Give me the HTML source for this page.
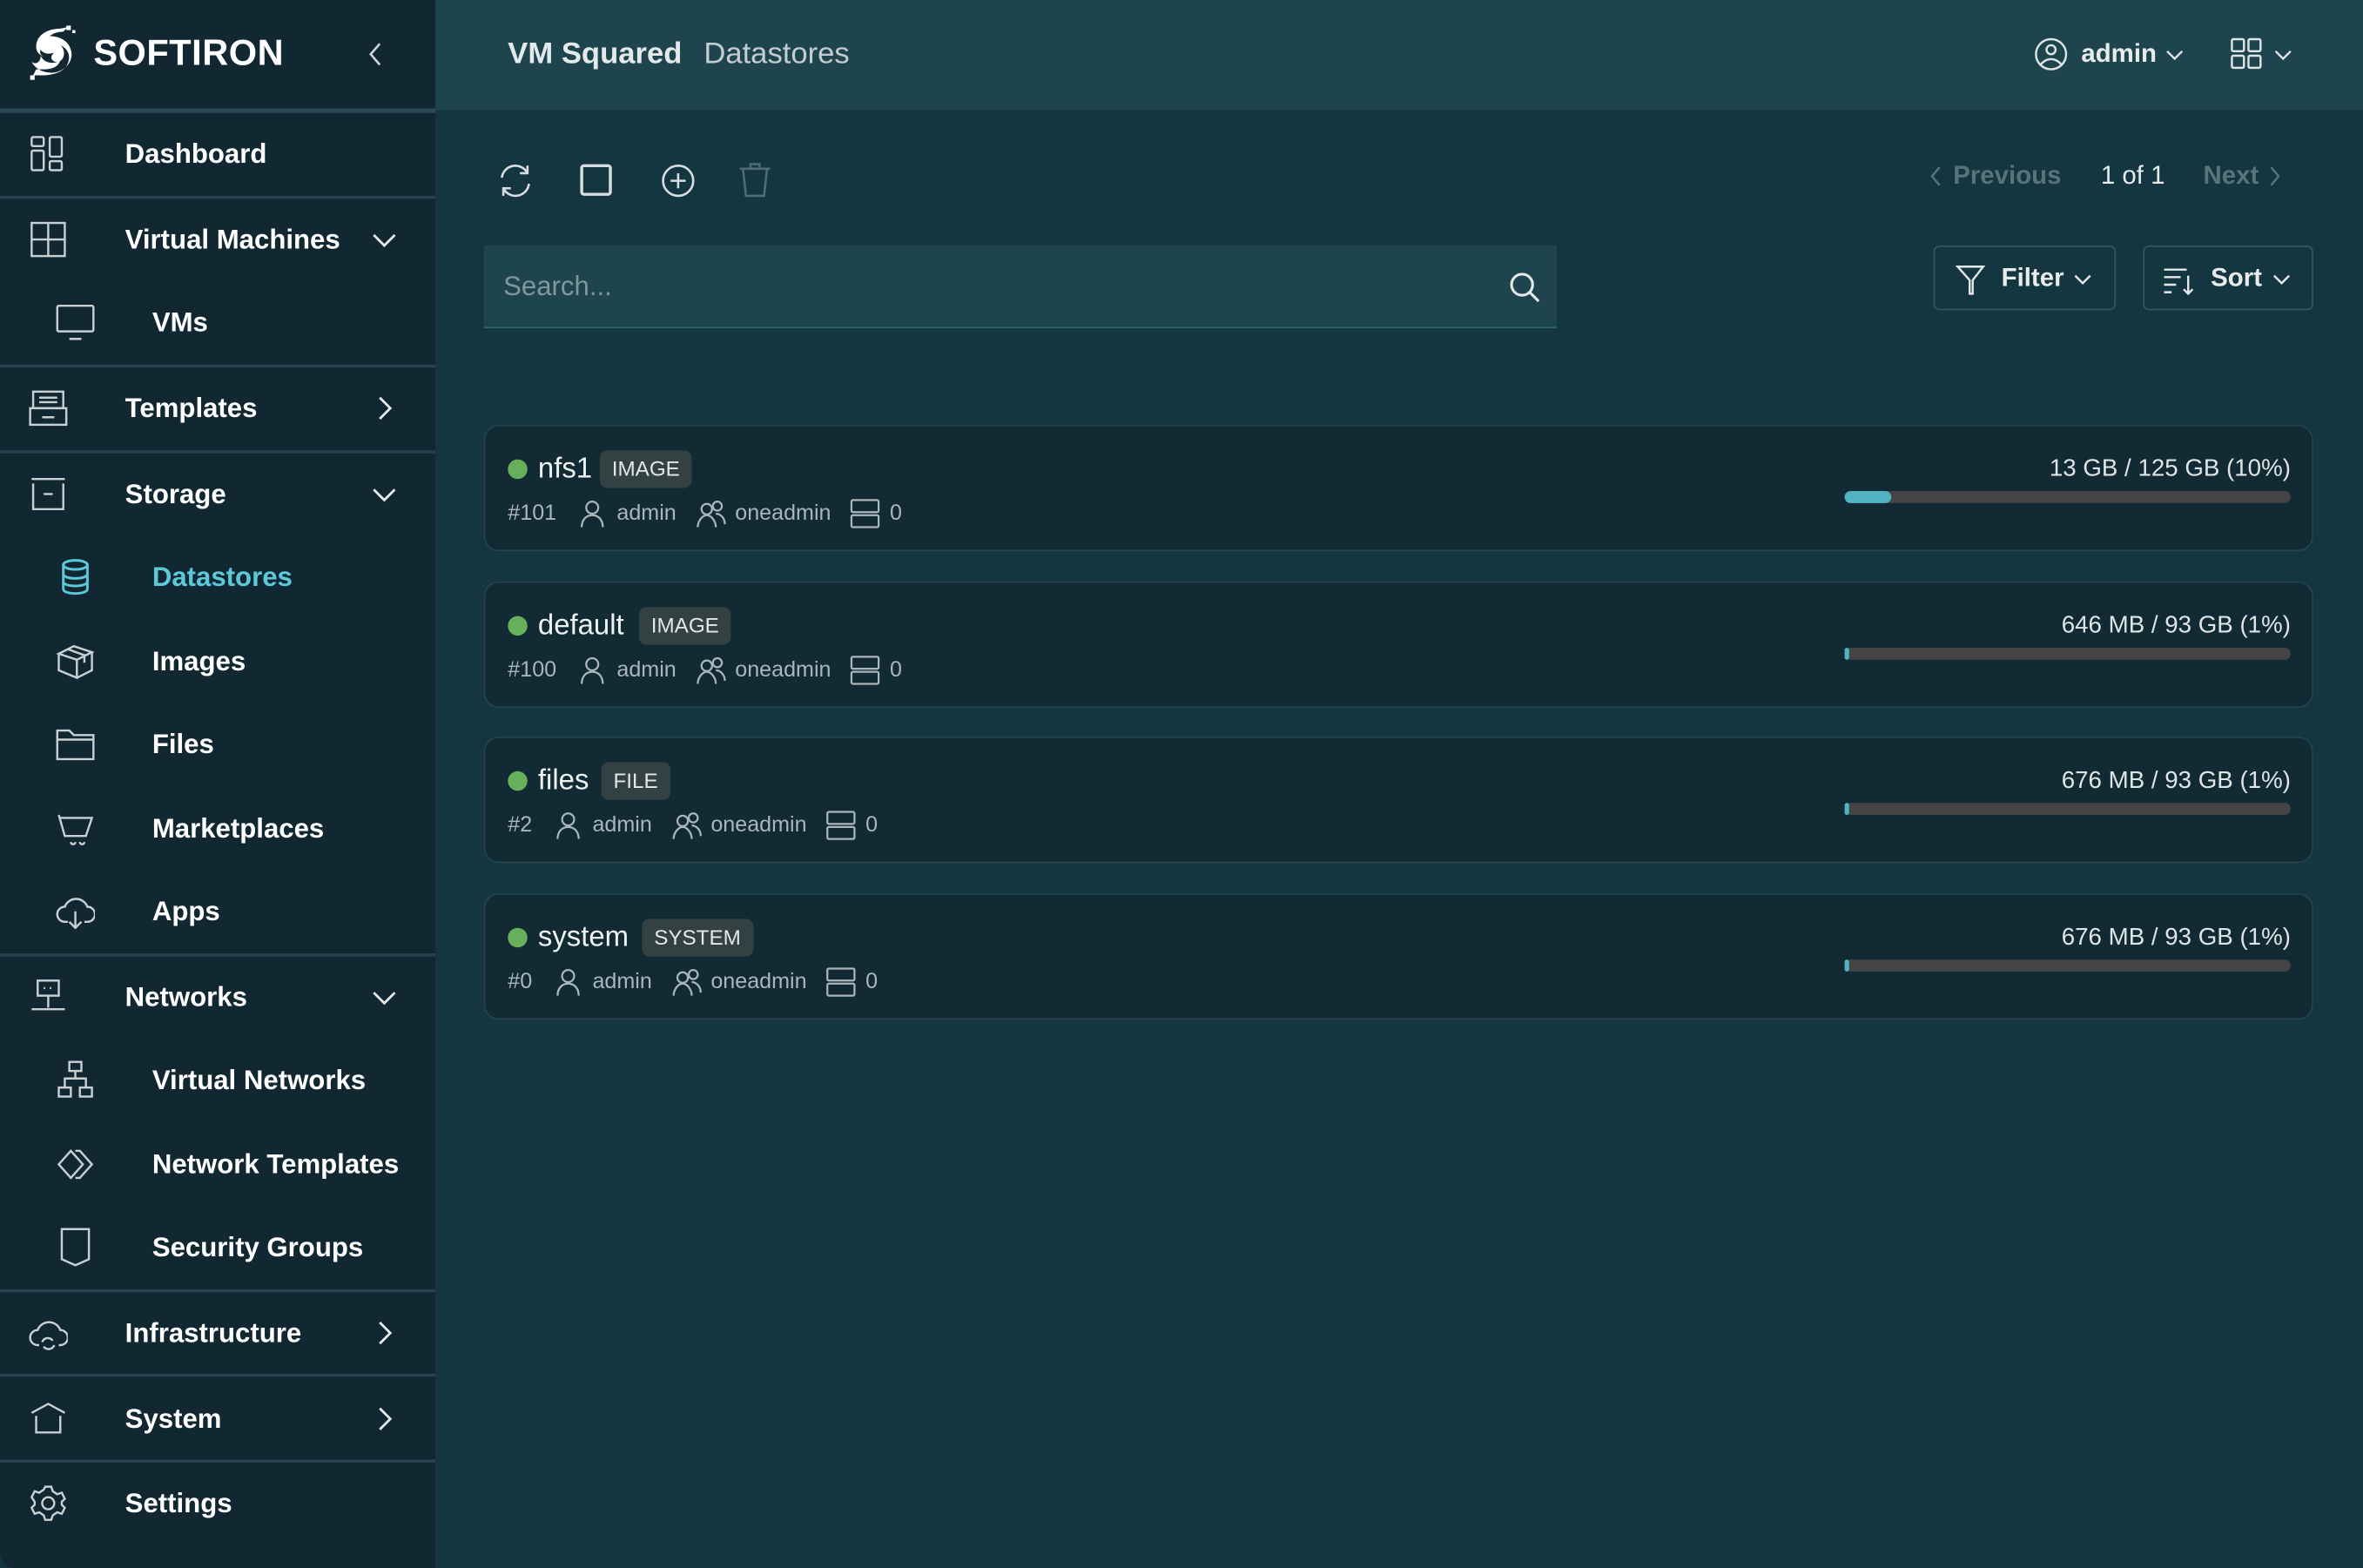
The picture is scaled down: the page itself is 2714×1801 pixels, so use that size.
<!DOCTYPE html>
<html><head><meta charset="utf-8">
<style>
*{box-sizing:border-box;margin:0;padding:0}
html,body{width:2714px;height:1801px;overflow:hidden;background:#143640}
#root{position:absolute;left:0;top:0;width:1568px;height:1041px;transform:scale(1.73087,1.7301);transform-origin:0 0;font-family:"Liberation Sans",sans-serif;color:#e8eced}
#side{position:absolute;left:0;top:0;width:289px;height:1041px;background:#112833;border-bottom-left-radius:10px}
.logo{position:absolute;left:18px;top:16px;height:40px;display:flex;align-items:center;font-weight:bold;font-size:24px;color:#fff;letter-spacing:.3px}
.hsep{position:absolute;left:0;width:289px;height:2px;background:#28434d}
.it{position:absolute;left:0;width:289px;height:30px;display:flex;align-items:center;font-size:18px;font-weight:bold;color:#fff}
.it svg.ic{position:absolute;width:26px;height:26px;fill:none;stroke:#c9d0d2;stroke-width:1.4}
.it span{position:absolute}
.top svg.ic{left:19px}.top span{left:83px}
.sub svg.ic{left:37px}.sub span{left:101px}
.chev{position:absolute;left:246px;width:18px;height:18px;fill:none;stroke:#e8eced;stroke-width:1.6}
#hdr{position:absolute;left:289px;top:0;width:1279px;height:73px;background:#1e454d}
.t1{position:absolute;left:48px;top:25px;font-size:20px;font-weight:bold;color:#e4e9ea}
.t2{position:absolute;left:178px;top:25px;font-size:20px;color:#c3ccce}
.tb svg{position:absolute;fill:none;stroke:#d8dee0;stroke-width:1.5}
.search{position:absolute;left:321px;top:163px;width:712px;height:55px;background:#1e454d;border-bottom:1.5px solid #2a6870}
.search span{position:absolute;left:13px;top:17px;font-size:18px;color:#7f979b}
.btn{position:absolute;top:163px;height:43px;border:1.5px solid #2a5a62;border-radius:4px;font-size:17px;font-weight:bold;color:#e8eced}
.card{position:absolute;left:321px;width:1214px;height:84px;background:#112a33;border:1.5px solid #25434b;border-radius:10px}
.dot{position:absolute;left:15px;top:22px;width:13px;height:13px;border-radius:50%;background:#66b05c}
.nm{position:absolute;left:35px;top:18px;font-size:19px;color:#eef2f3}
.tag{position:absolute;top:16px;height:25px;padding:0 8px;line-height:25px;background:#334143;border-radius:5px;font-size:14px;color:#e2e7e8}
.meta{position:absolute;left:15px;top:48px;font-size:14.5px;color:#aab6b9;display:flex;align-items:center;white-space:nowrap}
.meta svg{fill:none;stroke:#aab6b9;stroke-width:1.3;width:20px;height:20px;margin:0 6px 0 0}
.cap{position:absolute;right:14px;top:20px;font-size:16px;color:#dfe5e6}
.bar{position:absolute;left:902px;top:43px;width:296px;height:8px;border-radius:4px;background:#444}
.bar i{position:absolute;left:0;top:0;height:8px;border-radius:4px;background:#52b4c2}
</style></head><body><div id="root">
<div id="side">
 <div class="logo"><svg width="36" height="38" viewBox="0 0 36 38"><path d="M22 2c-8 0-16 4-16 12 0 4 3 6 6 7-3-1-4-3-3-5 2 3 6 3 9 2-4 3-1 7 3 6 5-2 4-9 1-11 5 2 8 8 4 14-3 4-9 6-16 6h-6l2-4h5c6 0 10-2 11-6-4 3-11 2-13-3 0 5-4 6-6 4 3 6 10 8 16 7 8-2 12-9 10-15-2-7-9-9-14-9 2-2 6-3 9-3l3-3z" fill="#fff"/><rect x="26" y="0" width="3" height="3" fill="#fff"/><rect x="30" y="3" width="2" height="2" fill="#fff"/><rect x="2" y="33" width="3" height="3" fill="#fff"/></svg><span style="margin-left:8px">SOFTIRON</span></div>
 <svg style="position:absolute;left:241px;top:27px" width="16" height="18" viewBox="0 0 16 18" fill="none" stroke="#cfd6d8" stroke-width="1.5"><path d="M11 2L5 9l6 7"/></svg>
 <div class="hsep" style="top:72px;height:3px;background:#2b4a53"></div>
 <div class="hsep" style="top:130px"></div><div class="hsep" style="top:242px"></div><div class="hsep" style="top:299px"></div><div class="hsep" style="top:633px"></div><div class="hsep" style="top:856px"></div><div class="hsep" style="top:912px"></div><div class="hsep" style="top:969px"></div>

 <div class="it top" style="top:87px"><svg class="ic" viewBox="0 0 26 26"><rect x="2" y="2" width="8" height="6" rx="1"/><rect x="2" y="11" width="8" height="13" rx="1"/><rect x="14" y="2" width="8" height="13" rx="1"/><rect x="14" y="18" width="8" height="6" rx="1"/></svg><span>Dashboard</span></div>
 <div class="it top" style="top:144px"><svg class="ic" viewBox="0 0 26 26"><rect x="2" y="2" width="22" height="22"/><path d="M13 2v22M2 13h22"/></svg><span>Virtual Machines</span><svg class="chev" viewBox="0 0 18 18"><path d="M2 6l7 7 7-7"/></svg></div>
 <div class="it sub" style="top:199px"><svg class="ic" viewBox="0 0 26 26"><rect x="1" y="2" width="24" height="17" rx="1"/><path d="M9 24h8"/></svg><span>VMs</span></div>
 <div class="it top" style="top:256px"><svg class="ic" viewBox="0 0 26 26"><rect x="3" y="2" width="20" height="11"/><rect x="1" y="13" width="24" height="11"/><path d="M7 6h12M7 9h12M9 19h8"/></svg><span>Templates</span><svg class="chev" viewBox="0 0 18 18"><path d="M6 2l7 7-7 7"/></svg></div>
 <div class="it top" style="top:313px"><svg class="ic" viewBox="0 0 26 26"><path d="M2 3h22M3 6v17h20V6"/><path d="M10 13h6"/></svg><span>Storage</span><svg class="chev" viewBox="0 0 18 18"><path d="M2 6l7 7 7-7"/></svg></div>
 <div class="it sub" style="top:368px;color:#5cc8d8"><svg class="ic" viewBox="0 0 26 26" style="stroke:#5cc8d8;stroke-width:1.7"><ellipse cx="13" cy="5" rx="8" ry="3"/><path d="M5 5v16c0 2 4 3 8 3s8-1 8-3V5M5 11c0 2 4 3 8 3s8-1 8-3M5 16c0 2 4 3 8 3s8-1 8-3"/></svg><span>Datastores</span></div>
 <div class="it sub" style="top:424px"><svg class="ic" viewBox="0 0 26 26"><path d="M2 8l10-5 12 4-10 5zM2 8v11l12 5V12M24 7v12l-10 5M8 5l11 4v5"/></svg><span>Images</span></div>
 <div class="it sub" style="top:479px"><svg class="ic" viewBox="0 0 26 26"><path d="M1 4h8l3 3h13v16H1zM1 10h24"/></svg><span>Files</span></div>
 <div class="it sub" style="top:535px"><svg class="ic" viewBox="0 0 26 26"><path d="M2 4l4 14h14l4-12H3"/><path d="M10 22a1 1 0 0 0 3 0M16 22a1 1 0 0 0 3 0"/></svg><span>Marketplaces</span></div>
 <div class="it sub" style="top:590px"><svg class="ic" viewBox="0 0 26 26"><path d="M8 20H6a5 5 0 0 1 0-10 8 8 0 0 1 15 0 5 5 0 0 1 0 10h-2M13 13v11M9 20l4 4 4-4"/></svg><span>Apps</span></div>
 <div class="it top" style="top:647px"><svg class="ic" viewBox="0 0 26 26"><rect x="6" y="2" width="14" height="10"/><path d="M13 12v8M2 21h22M10 7h1M14 7h1"/></svg><span>Networks</span><svg class="chev" viewBox="0 0 18 18"><path d="M2 6l7 7 7-7"/></svg></div>
 <div class="it sub" style="top:702px"><svg class="ic" viewBox="0 0 26 26"><rect x="9" y="1" width="8" height="6"/><rect x="2" y="18" width="8" height="6"/><rect x="16" y="18" width="8" height="6"/><path d="M13 7v5M6 18v-6h14v6"/></svg><span>Virtual Networks</span></div>
 <div class="it sub" style="top:758px"><svg class="ic" viewBox="0 0 26 26"><path d="M10 4l8 9-8 9-8-9zM13 4l3-0 8 9-8 9h-3"/></svg><span>Network Templates</span></div>
 <div class="it sub" style="top:813px"><svg class="ic" viewBox="0 0 26 26"><path d="M4 1h18v20l-9 4-9-4z"/></svg><span>Security Groups</span></div>
 <div class="it top" style="top:870px"><svg class="ic" viewBox="0 0 26 26"><path d="M7 21H6a5 5 0 0 1 0-10 8 8 0 0 1 15 0 5 5 0 0 1 0 10h-1M9 19a4 4 0 0 1 7-1M17 21a4 4 0 0 1-7 1"/></svg><span>Infrastructure</span><svg class="chev" viewBox="0 0 18 18"><path d="M6 2l7 7-7 7"/></svg></div>
 <div class="it top" style="top:927px"><svg class="ic" viewBox="0 0 26 26"><path d="M2 9l11-6 11 6M5 11v11h16V11"/></svg><span>System</span><svg class="chev" viewBox="0 0 18 18"><path d="M6 2l7 7-7 7"/></svg></div>
 <div class="it top" style="top:983px"><svg class="ic" viewBox="0 0 26 26"><circle cx="13" cy="13" r="4"/><path d="M11 2h4l1 3 3 2 3-1 2 4-2 2v2l2 2-2 4-3-1-3 2-1 3h-4l-1-3-3-2-3 1-2-4 2-2v-2L2 9l2-4 3 1 3-2z"/></svg><span>Settings</span></div>
</div>

<div id="hdr">
 <div class="t1">VM Squared</div><div class="t2">Datastores</div>
 <svg style="position:absolute;left:1060px;top:24px" width="24" height="24" viewBox="0 0 24 24" fill="none" stroke="#dfe5e6" stroke-width="1.4"><circle cx="12" cy="12" r="10"/><circle cx="12" cy="9" r="3"/><path d="M5 19c4-5 10-5 14 0"/></svg>
 <div style="position:absolute;left:1092px;top:26px;font-size:17px;font-weight:bold;color:#e8eced">admin</div>
 <svg style="position:absolute;left:1147px;top:32px" width="14" height="10" viewBox="0 0 14 10" fill="none" stroke="#dfe5e6" stroke-width="1.4"><path d="M2 2l5 5 5-5"/></svg>
 <svg style="position:absolute;left:1190px;top:24px" width="24" height="24" viewBox="0 0 24 24" fill="none" stroke="#dfe5e6" stroke-width="1.4"><rect x="2" y="2" width="8" height="8" rx="1"/><rect x="13" y="2" width="8" height="8" rx="1"/><rect x="2" y="13" width="8" height="8" rx="1"/><rect x="13" y="13" width="8" height="8" rx="1"/></svg>
 <svg style="position:absolute;left:1219px;top:32px" width="14" height="10" viewBox="0 0 14 10" fill="none" stroke="#dfe5e6" stroke-width="1.4"><path d="M2 2l5 5 5-5"/></svg>
</div>

<div class="tb">
 <svg style="left:329px;top:107px" width="26" height="26" viewBox="0 0 26 26"><path d="M4 11a9 9 0 0 1 17-3M22 15a9 9 0 0 1-17 3M21 3v5h-5M5 23v-5h5"/></svg>
 <svg style="left:384px;top:108px" width="24" height="24" viewBox="0 0 24 24"><rect x="2" y="2" width="19" height="19" rx="1.5" stroke-width="2"/></svg>
 <svg style="left:438px;top:108px" width="24" height="24" viewBox="0 0 24 24"><circle cx="12" cy="12" r="10"/><path d="M12 7v10M7 12h10"/></svg>
 <svg style="left:489px;top:107px;stroke:#4e6c72" width="24" height="26" viewBox="0 0 24 26"><path d="M2 5h20M9 5V2h6v3M4 5l2 18h12l2-18"/></svg>
</div>
<svg style="position:absolute;left:1279px;top:109px" width="10" height="16" viewBox="0 0 10 16" fill="none" stroke="#587479" stroke-width="1.4"><path d="M8 2L3 8l5 6"/></svg>
<div style="position:absolute;left:1296px;top:107px;font-size:17px;color:#587479;font-weight:bold">Previous</div>
<div style="position:absolute;left:1394px;top:107px;font-size:17px;color:#e6ebec">1 of 1</div>
<div style="position:absolute;left:1462px;top:107px;font-size:17px;color:#587479;font-weight:bold">Next</div>
<svg style="position:absolute;left:1505px;top:109px" width="10" height="16" viewBox="0 0 10 16" fill="none" stroke="#587479" stroke-width="1.4"><path d="M2 2l5 6-5 6"/></svg>

<div class="search"><span>Search...</span><svg style="position:absolute;left:680px;top:17px" width="22" height="22" viewBox="0 0 22 22" fill="none" stroke="#e3e8e9" stroke-width="1.8"><circle cx="9" cy="9" r="7"/><path d="M14 14l6 6"/></svg></div>
<div class="btn" style="left:1283px;width:121px"><svg style="position:absolute;left:13px;top:11px" width="22" height="22" viewBox="0 0 22 22" fill="none" stroke="#e3e8e9" stroke-width="1.4"><path d="M2 2h17l-7 9v9h-2v-9z"/></svg><span style="position:absolute;left:44px;top:11px">Filter</span><svg style="position:absolute;left:92px;top:17px" width="12" height="9" viewBox="0 0 12 9" fill="none" stroke="#e3e8e9" stroke-width="1.4"><path d="M1 2l5 5 5-5"/></svg></div>
<div class="btn" style="left:1422px;width:113px"><svg style="position:absolute;left:12px;top:12px" width="22" height="22" viewBox="0 0 22 22" fill="none" stroke="#e3e8e9" stroke-width="1.4"><path d="M1 3h15M1 8h11M1 13h8M1 18h5M17 7v12M14 16l3 3 3-3"/></svg><span style="position:absolute;left:44px;top:11px">Sort</span><svg style="position:absolute;left:85px;top:17px" width="12" height="9" viewBox="0 0 12 9" fill="none" stroke="#e3e8e9" stroke-width="1.4"><path d="M1 2l5 5 5-5"/></svg></div>

<div class="card" style="top:282px"><div class="dot"></div><div class="nm">nfs1</div><div class="tag" style="left:76px">IMAGE</div>
<div class="meta">#101<svg viewBox="0 0 20 20" style="margin-left:14px"><circle cx="10" cy="6" r="4"/><path d="M3 19c0-5 3-8 7-8s7 3 7 8"/></svg>admin<svg viewBox="0 0 20 20" style="margin-left:13px"><circle cx="7" cy="7" r="3.5"/><circle cx="14" cy="5" r="3"/><path d="M1 19c0-4 3-8 6-8s6 4 6 8M13 10c3 0 6 3 6 7"/></svg>oneadmin<svg viewBox="0 0 20 20" style="margin-left:13px"><rect x="1" y="1" width="18" height="8" rx="1"/><rect x="1" y="11" width="18" height="8" rx="1"/></svg>0</div>
<div class="cap">13 GB / 125 GB (10%)</div><div class="bar"><i style="width:31px"></i></div></div>

<div class="card" style="top:386px"><div class="dot"></div><div class="nm">default</div><div class="tag" style="left:102px">IMAGE</div>
<div class="meta">#100<svg viewBox="0 0 20 20" style="margin-left:14px"><circle cx="10" cy="6" r="4"/><path d="M3 19c0-5 3-8 7-8s7 3 7 8"/></svg>admin<svg viewBox="0 0 20 20" style="margin-left:13px"><circle cx="7" cy="7" r="3.5"/><circle cx="14" cy="5" r="3"/><path d="M1 19c0-4 3-8 6-8s6 4 6 8M13 10c3 0 6 3 6 7"/></svg>oneadmin<svg viewBox="0 0 20 20" style="margin-left:13px"><rect x="1" y="1" width="18" height="8" rx="1"/><rect x="1" y="11" width="18" height="8" rx="1"/></svg>0</div>
<div class="cap">646 MB / 93 GB (1%)</div><div class="bar"><i style="width:3px"></i></div></div>

<div class="card" style="top:489px"><div class="dot"></div><div class="nm">files</div><div class="tag" style="left:77px">FILE</div>
<div class="meta">#2<svg viewBox="0 0 20 20" style="margin-left:14px"><circle cx="10" cy="6" r="4"/><path d="M3 19c0-5 3-8 7-8s7 3 7 8"/></svg>admin<svg viewBox="0 0 20 20" style="margin-left:13px"><circle cx="7" cy="7" r="3.5"/><circle cx="14" cy="5" r="3"/><path d="M1 19c0-4 3-8 6-8s6 4 6 8M13 10c3 0 6 3 6 7"/></svg>oneadmin<svg viewBox="0 0 20 20" style="margin-left:13px"><rect x="1" y="1" width="18" height="8" rx="1"/><rect x="1" y="11" width="18" height="8" rx="1"/></svg>0</div>
<div class="cap">676 MB / 93 GB (1%)</div><div class="bar"><i style="width:3px"></i></div></div>

<div class="card" style="top:593px"><div class="dot"></div><div class="nm">system</div><div class="tag" style="left:104px">SYSTEM</div>
<div class="meta">#0<svg viewBox="0 0 20 20" style="margin-left:14px"><circle cx="10" cy="6" r="4"/><path d="M3 19c0-5 3-8 7-8s7 3 7 8"/></svg>admin<svg viewBox="0 0 20 20" style="margin-left:13px"><circle cx="7" cy="7" r="3.5"/><circle cx="14" cy="5" r="3"/><path d="M1 19c0-4 3-8 6-8s6 4 6 8M13 10c3 0 6 3 6 7"/></svg>oneadmin<svg viewBox="0 0 20 20" style="margin-left:13px"><rect x="1" y="1" width="18" height="8" rx="1"/><rect x="1" y="11" width="18" height="8" rx="1"/></svg>0</div>
<div class="cap">676 MB / 93 GB (1%)</div><div class="bar"><i style="width:3px"></i></div></div>
</div></body></html>
